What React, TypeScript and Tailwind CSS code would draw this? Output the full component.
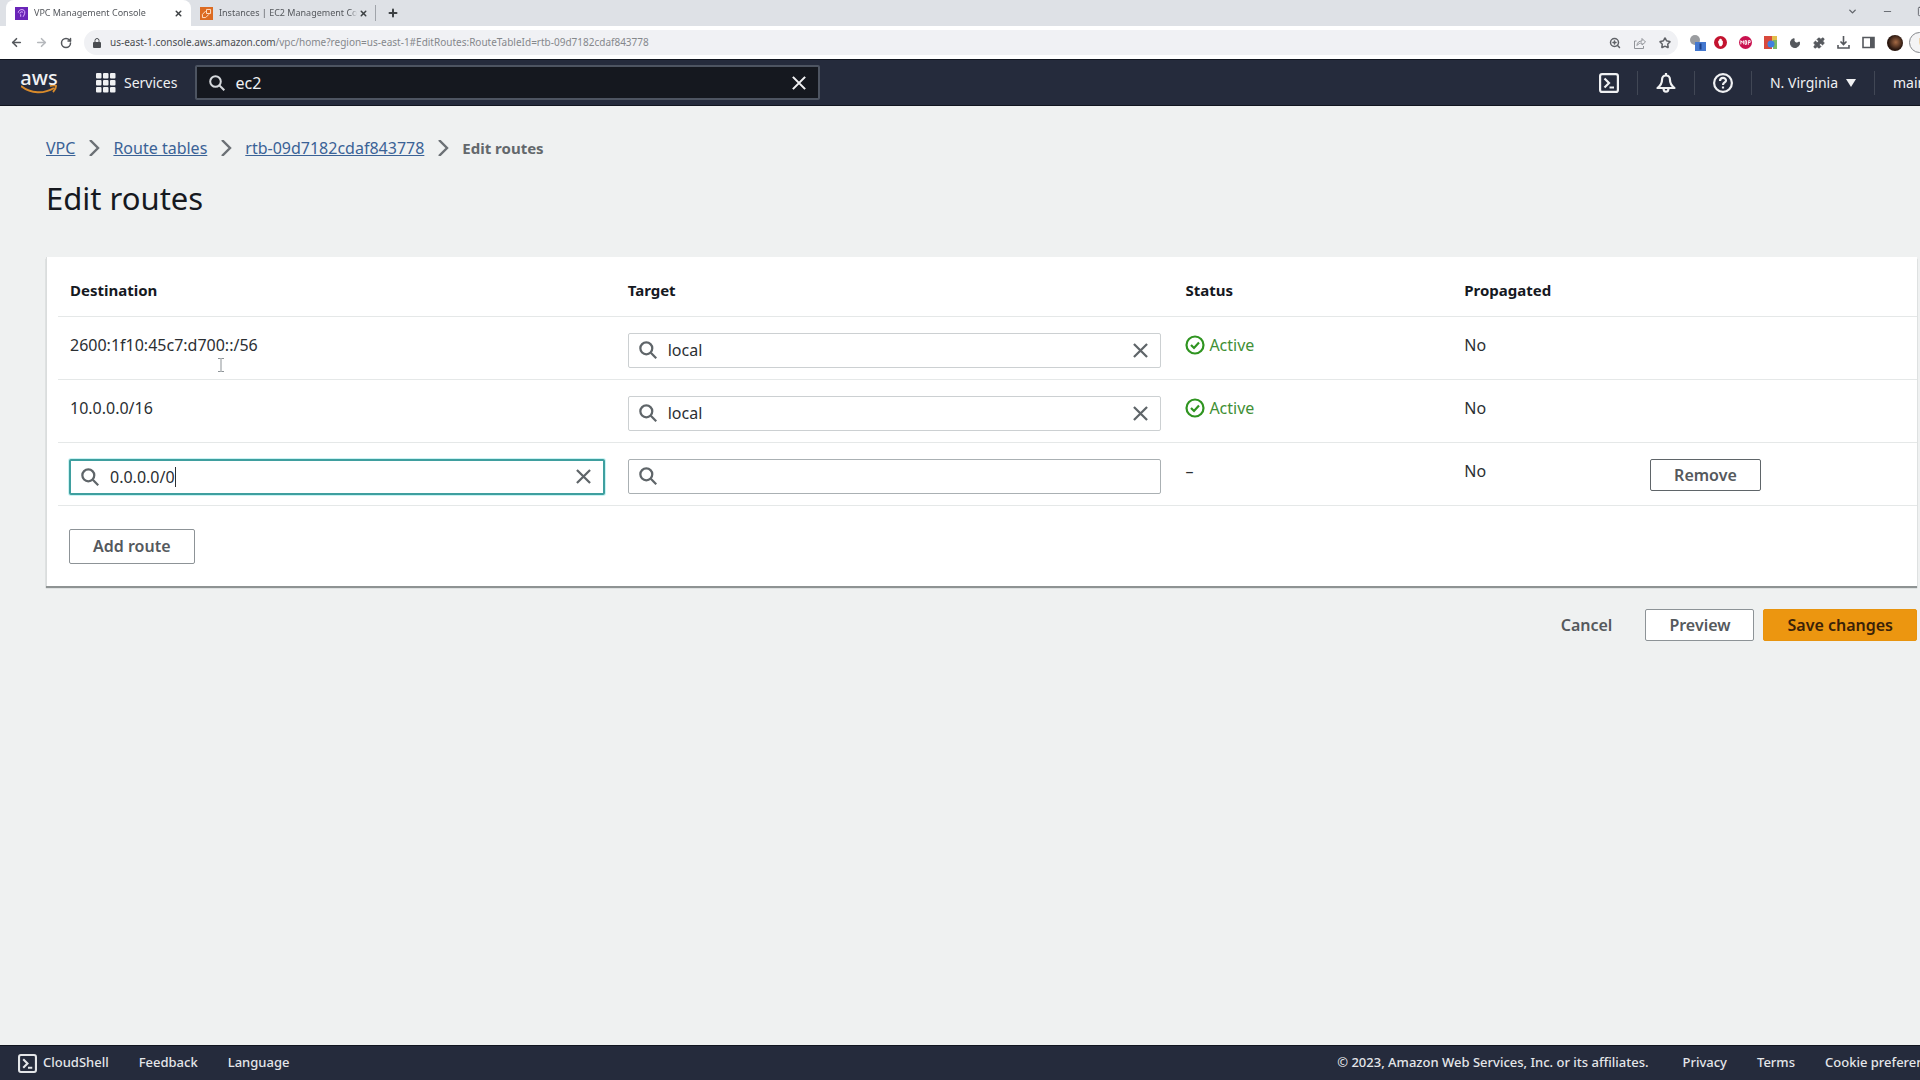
import { useState } from "react";
import {
  ArrowLeft, ArrowRight, ChevronDown, Minus, Moon, Plus,
  Puzzle, RotateCw, Square, Star, X, ZoomIn,
} from "lucide-react";

const routes = [
  { destination: "2600:1f10:45c7:d700::/56", target: "local", active: true, editable: false },
  { destination: "10.0.0.0/16", target: "local", active: true, editable: false },
  { destination: "0.0.0.0/0", target: "", active: false, editable: true },
];

function SearchIcon({ className }: { className: string }) {
  return (
    <svg className={className} viewBox="0 0 16 16" fill="none" stroke="currentColor" strokeWidth="2">
      <circle cx="6.5" cy="6.5" r="5.3" />
      <path d="M10.5 10.5 15.3 15.3" />
    </svg>
  );
}

function CloseIcon({ className }: { className: string }) {
  return (
    <svg className={className} viewBox="0 0 16 16" fill="none" stroke="currentColor" strokeWidth="2.4">
      <path d="M1 1 15 15M15 1 1 15" />
    </svg>
  );
}

function ShellIcon({ className }: { className: string }) {
  return (
    <svg className={className} viewBox="0 0 20 20" fill="none" stroke="currentColor" strokeWidth="2.2">
      <rect x="1.1" y="1.1" width="17.8" height="17.8" rx="2" />
      <path d="M5.5 5.5 10 10l-4.5 4.5M10.5 14.5H15" />
    </svg>
  );
}

function Divider() {
  return <span className="h-6 w-px shrink-0 bg-[#414755]" />;
}

function Tab({ title, active }: { title: string; active?: boolean }) {
  return (
    <div className={active ? "flex w-[185px] items-center rounded-t-lg bg-white pl-[9px] pr-[6px]" : "flex w-[184px] items-center pl-[9px] pr-[5px]"}>
      {active ? (
        <svg className="size-[13px] shrink-0" viewBox="0 0 16 16" fill="none">
          <rect width="16" height="16" fill="#6a25b8" />
          <path d="M4 7c0-3 4-5 7-3 2 2 1 5-1 8M6 8c0-2 3-3 4-1M7 9v3" stroke="#e0b5ff" strokeWidth="1.2" />
        </svg>
      ) : (
        <svg className="size-[13px] shrink-0" viewBox="0 0 16 16" fill="none">
          <rect width="16" height="16" fill="#dc6b22" />
          <path d="M8 3h5v5H8zM7 5 3 9v4h4l4-4" stroke="#ffe0c8" strokeWidth="1.2" />
        </svg>
      )}
      <span className="ml-[6px] flex-1 overflow-hidden whitespace-nowrap text-[9px] text-[#55585d] [mask-image:linear-gradient(to_right,black_95%,transparent)]">
        {title}
      </span>
      <button aria-label={`Close ${title}`} className="p-[2px] text-[#3c4043]">
        <X className="size-[9px]" strokeWidth={4} />
      </button>
    </div>
  );
}

function BrowserChrome() {
  return (
    <div className="shrink-0 overflow-hidden bg-white">
      <div className="flex h-[26px] bg-[#dee1e6] pl-[6px]">
        <Tab title="VPC Management Console" active />
        <Tab title="Instances | EC2 Management Console" />
        <div className="flex flex-1 items-center pb-px text-[#3c4043]">
          <span className="h-4 w-px bg-[#a0a4aa]" />
          <button aria-label="New tab" className="ml-[11px]"><Plus className="size-3" strokeWidth={4} /></button>
        </div>
        <div className="flex w-[73px] items-center gap-6 overflow-hidden pb-1 text-[#60646a]">
          <ChevronDown className="size-[11px] shrink-0" strokeWidth={3} />
          <Minus className="size-[11px] shrink-0" />
          <Square className="size-[11px] shrink-0" />
        </div>
      </div>

      <div className="flex h-[33px] items-center pl-[10px]">
        <nav className="flex items-center gap-3 text-[#55585d]">
          <button aria-label="Back"><ArrowLeft className="size-[13px]" strokeWidth={3} /></button>
          <button aria-label="Forward" className="text-[#b5b8bc]"><ArrowRight className="size-[13px]" strokeWidth={3} /></button>
          <button aria-label="Reload"><RotateCw className="size-[12px]" strokeWidth={3} /></button>
        </nav>
        <div className="ml-3 flex h-[25px] flex-1 items-center rounded-full bg-[#f0f1f4] pl-[9px] pr-[7px] text-[#606368]">
          <svg className="h-[10px] w-2" viewBox="0 0 8 10">
            <rect y="4" width="8" height="6" rx="1" fill="#4a4d51" />
            <path d="M2 4V2.5a2 2 0 0 1 4 0V4" fill="none" stroke="#4a4d51" />
          </svg>
          <p className="ml-[9px] flex-1 text-[10px] text-[#85888c]">
            <span className="text-[#4a4d51]">us-east-1.console.aws.amazon.com</span>
            /vpc/home?region=us-east-1#EditRoutes:RouteTableId=rtb-09d7182cdaf843778
          </p>
          <div className="flex items-center gap-[13px]">
            <ZoomIn className="size-3" strokeWidth={3} />
            <svg className="size-3" viewBox="0 0 12 12" fill="none" stroke="#909398">
              <path d="M2.5 4H.5v7.5h9V9M3 8.5c0-3 2-4.5 5-4.5V1.5L11.5 5 8 8V6C6 6 4.5 6.5 3 8.5z" />
            </svg>
            <Star className="size-3" strokeWidth={3} />
          </div>
        </div>
        <div className="flex w-[242px] items-center gap-3 pl-3 text-[#55585d]">
          <svg className="-mr-1 h-4 w-4 shrink-0" viewBox="0 0 16 16">
            <circle cx="5" cy="5" r="5" fill="#9b9da0" />
            <rect x="5" y="7" width="11" height="9" fill="#4478cf" />
            <path d="M10.5 8.5v6" stroke="#1b3f87" strokeWidth="2" />
          </svg>
          <svg className="size-[13px] shrink-0" viewBox="0 0 14 14">
            <circle cx="7" cy="7" r="7" fill="#c3132f" />
            <path d="M4.5 7V5h1V3.5h1V3h1v.5h1V5h1v4L8 11H6z" fill="#fff" />
          </svg>
          <svg className="size-[13px] shrink-0" viewBox="0 0 14 14">
            <circle cx="7" cy="7" r="7" fill="#c9124f" />
            <path d="M2 9V5l1.5 2L5 5v4M6.5 9V5H8v4H6.5M10 9.5V5h2v2h-2" fill="none" stroke="#fff" />
          </svg>
          <svg className="size-[13px] shrink-0" viewBox="0 0 13 13">
            <path d="M0 0h8v13H0z" fill="#d8493c" />
            <path d="M8 0h5v6H8z" fill="#e2bd4b" />
            <path d="M9 4h4v9H9z" fill="#79b865" />
            <circle cx="7" cy="8" r="3.5" fill="#3f7fe0" />
          </svg>
          <Moon className="size-[12px] shrink-0 -rotate-12 fill-current" />
          <Puzzle className="size-[12px] shrink-0 fill-current" />
          <svg className="size-[13px] shrink-0" viewBox="0 0 13 13" fill="none" stroke="currentColor" strokeWidth="1.6">
            <path d="M6.5 0v8M3.5 5.5l3 3 3-3M1 9v3h11V9" />
          </svg>
          <svg className="size-[13px] shrink-0" viewBox="0 0 13 13" fill="none" stroke="currentColor" strokeWidth="1.6">
            <path d="M1 1.5h11v10H1z" />
            <path d="M8 2h4v9H8z" fill="currentColor" stroke="none" />
          </svg>
          <span className="size-4 shrink-0 rounded-full bg-[radial-gradient(circle_at_55%_45%,#a56a45_0,#2a1710_60%)]" />
          <button className="-ml-[6px] flex h-[21px] w-14 shrink-0 items-center rounded-full border border-[#85888c] bg-[#f4f4f5] pl-[9px] text-[10px]">Update</button>
        </div>
      </div>
    </div>
  );
}

function TopNav() {
  const [query, setQuery] = useState("ec2");
  return (
    <header className="flex h-[47px] shrink-0 items-center border-y border-[#11151f] bg-[#252b3c] pl-[21px] text-sm text-[#f0f1f3]">
      <a href="#home" aria-label="AWS home" className="flex w-9 flex-col items-center">
        <span className="text-[20px] leading-[14px] font-medium">aws</span>
        <svg className="h-[9px] w-9" viewBox="0 0 36 9" fill="none" stroke="#d88a2b" strokeWidth="2">
          <path d="M0 1c10 8 23 8 33 2M29 1c3-1 6-1 6 0s-1 4-3 6" />
        </svg>
      </a>
      <span className="ml-[19px]"><Divider /></span>
      <button className="ml-5 flex items-center gap-2">
        <svg className="size-5" viewBox="0 0 20 20" fill="currentColor">
          {[0, 7, 14].map((y) => [0, 7, 14].map((x) => <rect key={`${x}-${y}`} x={x} y={y} width="5.5" height="5.5" rx="1" />))}
        </svg>
        Services
      </button>
      <div className="ml-[18px] flex h-[35px] w-[625px] items-center rounded-xs border-2 border-[#4d5461] bg-[#15181f] px-3">
        <SearchIcon className="size-4 text-[#d5d8dc]" />
        <input
          aria-label="Search"
          value={query}
          onChange={(e) => setQuery(e.target.value)}
          className="ml-[10px] min-w-0 flex-1 bg-transparent text-base outline-none"
        />
        <button aria-label="Clear search" onClick={() => setQuery("")}><CloseIcon className="size-[14px]" /></button>
      </div>
      <div className="ml-auto flex items-center gap-[18px]">
        <button aria-label="CloudShell"><ShellIcon className="size-5" /></button>
        <Divider />
        <button aria-label="Notifications">
          <svg className="size-5" viewBox="0 0 20 20" fill="none" stroke="currentColor" strokeWidth="2.2" strokeLinejoin="round">
            <path d="M10 2.5C7.5 2.5 6 4 6 7c0 4-2 6-4.5 8h17C16 13 14 11 14 7c0-3-1.5-4.5-4-4.5zM10 0v2.5M7.5 15c0 5 5 5 5 0" />
          </svg>
        </button>
        <Divider />
        <button aria-label="Help">
          <svg className="size-5" viewBox="0 0 20 20" fill="none" stroke="currentColor" strokeWidth="2.2">
            <circle cx="10" cy="10" r="8.9" />
            <path d="M7 8c0-4 6-4 6-.5 0 2-3 2-3 4.5M10 13.5v2" />
          </svg>
        </button>
        <Divider />
        <button className="flex items-center gap-2">
          N. Virginia
          <svg className="h-2 w-[10px]" viewBox="0 0 10 8" fill="currentColor"><path d="M0 0h10L5 8z" /></svg>
        </button>
        <Divider />
        <span className="w-[27px] overflow-hidden">main</span>
      </div>
    </header>
  );
}

function Breadcrumbs() {
  return (
    <nav aria-label="Breadcrumb" className="flex items-center gap-[13px] text-base text-[#3a6296]">
      {["VPC", "Route tables", "rtb-09d7182cdaf843778"].map((name) => (
        <span key={name} className="flex items-center gap-[13px]">
          <a href="#routes" className="underline">{name}</a>
          <svg className="h-4 w-3" viewBox="0 0 12 16" fill="none" stroke="#6b7075" strokeWidth="2.4">
            <path d="M2 0 10 8 2 16" />
          </svg>
        </span>
      ))}
      <span className="text-[15px] font-bold text-[#63686c]">Edit routes</span>
    </nav>
  );
}

function SearchField({ label, initial, focused, muted }: { label: string; initial: string; focused?: boolean; muted?: boolean }) {
  const [value, setValue] = useState(initial);
  const border = focused
    ? "-mx-px h-9 border-2 border-[#3f9f9f] ring-1 ring-[#c9f3f3] px-[10px]"
    : muted
      ? "h-[35px] border border-[#ccd0d2] px-[10px]"
      : "h-[35px] border border-[#aab0b3] px-[10px]";
  return (
    <div className={`flex items-center rounded-xs bg-white text-[#5f6569] ${border}`}>
      <SearchIcon className="size-[18px] shrink-0" />
      <span className="relative ml-[11px] flex min-w-0 flex-1 items-center">
        <input
          aria-label={label}
          value={value}
          onChange={(e) => setValue(e.target.value)}
          className="w-full bg-transparent text-base text-[#2b2f33] outline-none"
        />
        {focused && (
          <span className="pointer-events-none absolute left-0 flex h-5 border-r border-[#2b2f33] text-base">
            <span className="invisible">{value}</span>
          </span>
        )}
      </span>
      {value && (
        <button aria-label={`Clear ${label}`} onClick={() => setValue("")} className="mr-[2px]">
          <CloseIcon className="size-[15px]" />
        </button>
      )}
    </div>
  );
}

function ActionButton({ children, className }: { children: string; className: string }) {
  return <button className={`rounded-xs border px-[23px] text-base font-semibold ${className}`}>{children}</button>;
}

function RoutesTable() {
  return (
    <section className="relative border-l border-[#dadddd] bg-white pl-[11px] shadow-[0_2px_1px_#8e9393]">
      <table className="w-full table-fixed border-collapse text-left text-base text-[#2b2f33]">
        <thead>
          <tr className="h-[59px] border-b border-[#e5e8e8] text-[15px] text-[#16191f]">
            <th className="w-[30%] px-3 pt-2 font-bold">Destination</th>
            <th className="w-[30%] px-3 pt-2 font-bold">Target</th>
            <th className="w-[15%] px-3 pt-2 font-bold">Status</th>
            <th className="w-[10%] px-3 pt-2 font-bold">Propagated</th>
            <td className="w-[15%]" />
          </tr>
        </thead>
        <tbody>
          {routes.map((route) => (
            <tr key={route.destination} className="border-b border-[#e5e8e8] align-top">
              <td className="px-3 pt-4">
                {route.editable ? <SearchField label="Destination" initial={route.destination} focused /> : route.destination}
              </td>
              <td className="px-3 pt-4 pb-[11px]">
                <SearchField label={`Target for ${route.destination}`} initial={route.target} muted={!route.editable} />
              </td>
              <td className="px-3 pt-4">
                {route.active ? (
                  <span className="flex items-center gap-1 text-[#3f9035]">
                    <svg className="size-5" viewBox="0 0 20 20" fill="none" stroke="#2f9420" strokeWidth="2.2">
                      <circle cx="10" cy="10" r="8.5" />
                      <path d="m6 10 3 3 5-5.5" />
                    </svg>
                    Active
                  </span>
                ) : "–"}
              </td>
              <td className="px-3 pt-4">No</td>
              <td className="px-3 pt-4">
                {route.editable && <ActionButton className="h-8 border-[#5f6569] bg-white text-[#55595d]">Remove</ActionButton>}
              </td>
            </tr>
          ))}
        </tbody>
      </table>
      <div className="px-[11px] pt-[23px] pb-[22px]">
        <ActionButton className="h-[35px] border-[#8d9397] bg-white text-[#55595d]">Add route</ActionButton>
      </div>
      {/* text cursor */}
      <svg className="absolute top-[101px] left-[170px] h-[14px] w-[8px]" viewBox="0 0 8 14" fill="none" stroke="#8d9397">
        <path d="M1 .5h2.5L4 1l.5-.5H7M4 1v12M1 13.5h2.5L4 13l.5.5H7" />
      </svg>
    </section>
  );
}

function Footer() {
  return (
    <footer className="flex h-[35px] shrink-0 items-center border-t border-[#11151f] bg-[#252b3c] pl-[18px] text-[13px] font-medium text-[#e4e6e9]">
      <button className="flex items-center gap-[6px]"><ShellIcon className="size-[19px]" />CloudShell</button>
      <a href="#feedback" className="ml-[30px]">Feedback</a>
      <button className="ml-[30px]">Language</button>
      <span className="ml-auto">© 2023, Amazon Web Services, Inc. or its affiliates.</span>
      <a href="#privacy" className="ml-[34px]">Privacy</a>
      <a href="#terms" className="ml-[30px]">Terms</a>
      <a href="#cookies" className="ml-[30px] w-[95px] overflow-hidden whitespace-nowrap">Cookie preferences</a>
    </footer>
  );
}

export default function App() {
  return (
    <div className="flex min-h-screen flex-col overflow-hidden bg-[#eff1f1] font-['Noto_Sans',sans-serif]">
      <BrowserChrome />
      <TopNav />
      <main className="flex-1 pt-[30px] pr-[3px] pl-[46px]">
        <Breadcrumbs />
        <h1 className="mt-4 mb-[37px] text-[31px] leading-[44px] text-[#16191f]">Edit routes</h1>
        <RoutesTable />
        <div className="mt-[23px] flex items-center justify-end gap-[9px]">
          <ActionButton className="h-8 border-transparent text-[#55595d]">Cancel</ActionButton>
          <ActionButton className="h-8 border-[#8d9397] bg-white text-[#55595d]">Preview</ActionButton>
          <ActionButton className="h-8 border-[#e8940f] bg-[#ec9610] text-[#3a2208]">Save changes</ActionButton>
        </div>
      </main>
      <Footer />
    </div>
  );
}
